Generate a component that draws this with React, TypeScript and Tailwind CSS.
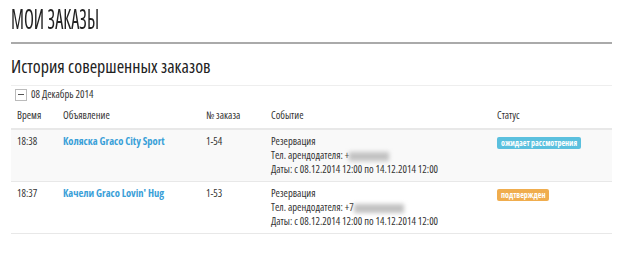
import React from "react";

function Phone({ w }: { w: string }) {
  return (
    <span className={`relative inline-block align-middle h-[9px] ${w}`}>
      <span className="absolute inset-0 bg-[#c2c2c2] blur-[2px]" />
    </span>
  );
}

type Row = { time: string; title: string; num: string; status: string; color: string; bg: string; phoneW: string; plus: string };

const rows: Row[] = [
  { time: "18:38", title: "Коляска Graco City Sport", num: "1-54", status: "ожидает рассмотрения", color: "bg-[#5bc0de]", bg: "bg-[#f9f9f9]", phoneW: "w-[40px]", plus: "+" },
  { time: "18:37", title: "Качели Graco Lovin' Hug", num: "1-53", status: "подтвержден", color: "bg-[#f0ad4e]", bg: "bg-white", phoneW: "w-[50px]", plus: "+7" },
];

export default function App() {
  return (
    <div className="w-[630px] h-[255px] bg-white text-[#333] overflow-hidden font-['Open_Sans',sans-serif] font-stretch-condensed">
      <div className="pl-[11px] pr-[18px]">
        <h1 className="pt-[3px] text-[28px] leading-[30px] text-[#222] h-[33px] whitespace-nowrap font-medium">
          <span className="inline-block origin-left scale-x-[0.65]">МОИ ЗАКАЗЫ</span>
        </h1>
        <div className="mt-[9px] h-[2px] bg-[#aaa]" />
        <h2 className="mt-[12px] text-[18px] leading-[20px] text-[#222]">История совершенных заказов</h2>
        <div className="mt-[9px] h-px bg-[#eee]" />
        <div className="flex items-center gap-[4px] pl-[4px] mt-[2px] h-[13px]">
          <span className="w-[12px] h-[12px] border border-[#bbb] flex items-center justify-center">
            <span className="w-[6px] h-px bg-[#555]" />
          </span>
          <span className="text-[10.5px] text-[#333]">08 Декабрь 2014</span>
        </div>
        <div className="flex text-[10.5px] text-[#333] h-[26px] items-center border-b-2 border-[#e8e8e8] mt-[3px]">
          <div className="w-[52px] pl-[6px]">Время</div>
          <div className="w-[143px]">Объявление</div>
          <div className="w-[65px]">№ заказа</div>
          <div className="w-[226px]">Событие</div>
          <div>Статус</div>
        </div>
        {rows.map((r) => (
          <div key={r.num} className={`flex text-[10.5px] leading-[14px] text-[#333] h-[52px] pt-[4px] border-b border-[#e8e8e8] ${r.bg}`}>
            <div className="w-[52px] pl-[6px]">{r.time}</div>
            <div className="w-[143px] text-[#3aa0d8] font-bold text-[10.5px]">{r.title}</div>
            <div className="w-[65px]">{r.num}</div>
            <div className="w-[226px] flex flex-col">
              <span>Резервация</span>
              <span>Тел. арендодателя: {r.plus}<Phone w={r.phoneW} /></span>
              <span>Даты: с 08.12.2014 12:00 по 14.12.2014 12:00</span>
            </div>
            <div className="pt-[1px]">
              <span className={`inline-block ${r.color} text-white font-bold text-[8px] leading-[12px] px-[4px] rounded-[2px]`}>{r.status}</span>
            </div>
          </div>
        ))}
      </div>
    </div>
  );
}
